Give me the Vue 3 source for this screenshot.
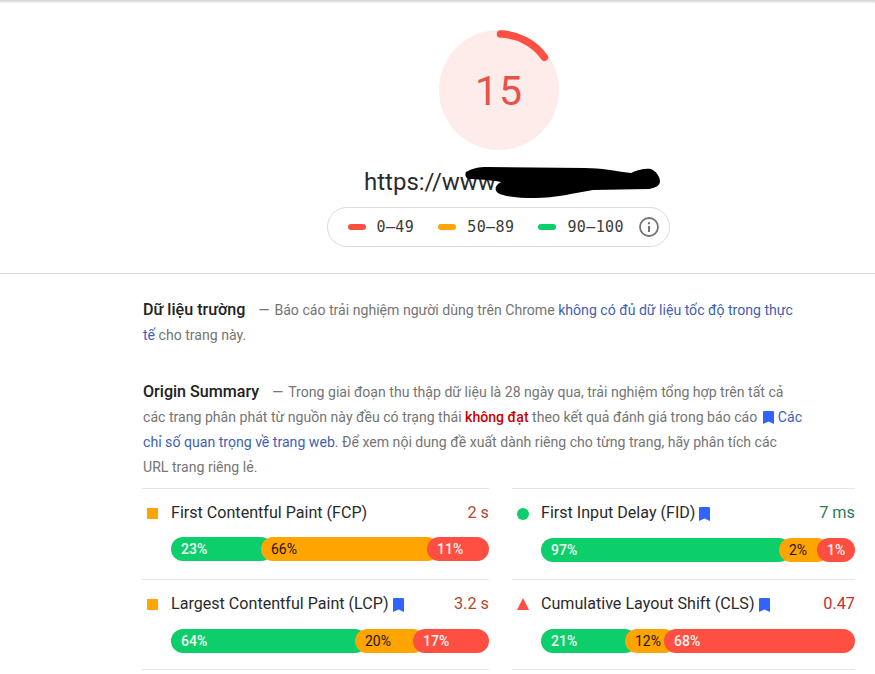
<script setup>
const legend = [
  { label: '0–49', color: '#ff4e42' },
  { label: '50–89', color: '#ffa400' },
  { label: '90–100', color: '#0cce6b' }
]
const rows = [
  { name: 'First Contentful Paint (FCP)', mark: false, value: '2 s', tone: 'avg', shape: 'square', cols: 'left', starts: [90, 256], labels: ['23%', '66%', '11%'] },
  { name: 'First Input Delay (FID)', mark: true, value: '7 ms', tone: 'good', shape: 'dot', cols: 'right', starts: [238, 276], labels: ['97%', '2%', '1%'] },
  { name: 'Largest Contentful Paint (LCP)', mark: true, value: '3.2 s', tone: 'avg', shape: 'square', cols: 'left', starts: [184, 242], labels: ['64%', '20%', '17%'] },
  { name: 'Cumulative Layout Shift (CLS)', mark: true, value: '0.47', tone: 'bad', shape: 'tri', cols: 'right', starts: [84, 123], labels: ['21%', '12%', '68%'] }
]
function segWidth(row, i) {
  const total = row.cols === 'left' ? 318 : 314
  const edges = [0, row.starts[0], row.starts[1], total]
  return (edges[i + 1] - edges[i] + (i < 2 ? 12 : 0)) + 'px'
}
</script>

<template>
  <div class="page">
    <div class="topbar"></div>
    <header class="head">
      <svg class="gauge" width="120" height="120" viewBox="0 0 120 120">
        <circle cx="60" cy="60" r="60" fill="#feecea" />
        <circle cx="60" cy="60" r="56" fill="none" stroke="#ff4e42" stroke-width="7.5" stroke-linecap="round"
          stroke-dasharray="51.5 400" transform="rotate(-88.5 60 60)" />
      </svg>
      <div class="score">15</div>
      <div class="url-wrap">
        <div class="url">https://www</div>
        <svg class="blot" width="200" height="36" viewBox="0 0 200 36">
          <path fill="#000" d="M1 7 C8 3 14 2 22 2 L120 3 C136 3 150 6 166 8 C172 5 180 3 186 4 C191 6 195 12 195 16 C195 21 190 23 184 24 L128 25 C110 28 90 33 70 33 C55 33 40 32 33 28 C29 25 30 20 36 17 C26 15 12 14 3 14 C0 12 0 9 1 7 Z" />
        </svg>
      </div>
      <div class="pill">
        <div v-for="item in legend" :key="item.label" class="legend-item">
          <span class="dash" :style="{ background: item.color }"></span>
          <span class="range">{{ item.label }}</span>
        </div>
        <svg class="info" width="20" height="20" viewBox="0 0 20 20">
          <circle cx="10" cy="10" r="9" fill="none" stroke="#757575" stroke-width="1.8" />
          <rect x="9" y="9" width="2" height="6" fill="#757575" />
          <rect x="9" y="5.2" width="2" height="2" fill="#757575" />
        </svg>
      </div>
    </header>

    <main class="content">
      <p class="para first">
        <strong class="lead">Dữ liệu trường</strong><span class="sep">—</span>Báo cáo trải nghiệm người dùng trên Chrome
        <a class="link">không có đủ dữ liệu tốc độ trong thực<br />tế</a> cho trang này.
      </p>
      <p class="para second">
        <strong class="lead">Origin Summary</strong><span class="sep">—</span>Trong giai đoạn thu thập dữ liệu là 28 ngày qua, trải nghiệm tổng hợp trên tất cả<br />
        các trang phân phát từ nguồn này đều có trạng thái <b class="fail">không đạt</b> theo kết quả đánh giá trong báo cáo
        <svg class="mark inline" width="11" height="13" viewBox="0 0 11 13"><path d="M1.2 0h8.6C10.5 0 11 .5 11 1.2V13L5.5 10.6 0 13V1.2C0 .5.5 0 1.2 0Z" /></svg><a class="link">Các<br />chỉ số quan trọng về trang web</a>. Để xem nội dung đề xuất dành riêng cho từng trang, hãy phân tích các<br />
        URL trang riêng lẻ.
      </p>

      <section class="grid">
        <article v-for="row in rows" :key="row.name" class="metric">
          <div class="metric-top">
            <span class="shape" :class="row.shape"></span>
            <span class="name">{{ row.name }}</span>
            <svg v-if="row.mark" class="mark" width="11" height="14" viewBox="0 0 11 14"><path d="M1.2 0h8.6C10.5 0 11 .5 11 1.2V14L5.5 11.4 0 14V1.2C0 .5.5 0 1.2 0Z" /></svg>
            <span class="value" :class="row.tone">{{ row.value }}</span>
          </div>
          <div class="bar">
            <span v-for="(label, i) in row.labels" :key="i" class="seg" :class="'seg' + i" :style="{ width: segWidth(row, i) }">{{ label }}</span>
          </div>
        </article>
      </section>
    </main>
  </div>
</template>

<style>
html, body { margin: 0; background: #fff; overflow: hidden; }
</style>

<style scoped>
.page {
  width: 875px;
  height: 674px;
  overflow: hidden;
  font-family: Roboto, "Noto Sans", sans-serif;
  color: #212121;
  background: #fff;
}
.topbar {
  height: 3px;
  background: linear-gradient(#d2d2d2, #f4f4f4);
}
.head {
  position: relative;
  height: 217px;
  padding: 27px 0 26px 123px;
  display: flex;
  flex-direction: column;
  align-items: center;
  border-bottom: 1px solid #dcdcdc;
}
.gauge { display: block; flex: none; }
.score {
  position: absolute;
  top: 60px;
  left: 123px;
  right: 0;
  text-align: center;
  font-size: 41px;
  line-height: 56px;
  letter-spacing: 1px;
  color: #e8524a;
}
.url-wrap {
  position: relative;
  margin-top: 17px;
  width: 270px;
  height: 30px;
}
.url {
  font-size: 24px;
  line-height: 30px;
  color: #2b2b2b;
}
.blot { position: absolute; left: 101px; top: -2px; }
.pill {
  margin-top: 10px;
  margin-left: -2px;
  width: 343px;
  height: 42px;
  box-sizing: border-box;
  border: 1px solid #dcdcdc;
  border-radius: 21px;
  display: flex;
  align-items: center;
  padding: 0 10px 0 20px;
  gap: 24px;
}
.legend-item { display: flex; align-items: center; gap: 11px; flex: none; }
.dash { width: 18px; height: 6px; border-radius: 3px; display: block; }
.range {
  font-family: "DejaVu Sans Mono", "Liberation Mono", monospace;
  font-size: 15px;
  letter-spacing: 0.4px;
  color: #3c3c3c;
  line-height: 20px;
  white-space: nowrap;
}
.info { margin-left: -9px; flex: none; }

.content { padding: 24px 20px 0 142px; }
.para {
  margin: 0 0 0 1px;
  font-size: 14.1px;
  line-height: 25px;
  color: #757575;
  white-space: nowrap;
}
.second { margin-top: 32px; }
.lead { font-size: 16.1px; line-height: 1; font-weight: 500; color: #212121; }
.sep { margin: 0 5px 0 13px; }
.link { color: #3f5fb5; }
.fail { color: #c80000; font-weight: 500; }
.mark { fill: #3164ff; flex: none; margin-top: 1px; }
.mark.inline { vertical-align: -2px; margin: 0 4px 0 2px; }

.grid {
  margin-top: 8px;
  display: grid;
  grid-template-columns: 347px 343px;
  column-gap: 23px;
}
.metric {
  height: 91px;
  box-sizing: border-box;
  border-top: 1px solid #e6e6e6;
  padding: 12px 0 0 29px;
}
.metric:nth-last-child(-n + 2) {
  border-bottom: 1px solid #e6e6e6;
}
.metric-top {
  position: relative;
  display: flex;
  align-items: center;
  gap: 4px;
  height: 24px;
}
.shape { position: absolute; left: -24px; top: 7px; width: 11px; height: 11px; }
.shape.square { background: #ffa400; }
.shape.dot { background: #0cce6b; border-radius: 50%; width: 12px; height: 12px; top: 7px; }
.shape.tri {
  top: 6px;
  width: 0; height: 0;
  border-left: 6px solid transparent;
  border-right: 6px solid transparent;
  border-bottom: 12px solid #ff4e42;
}
.name { font-size: 16.1px; line-height: 24px; color: #2a2a2a; }
.value { margin-left: auto; font-size: 16.3px; line-height: 24px; }
.value.avg { color: #b5482a; }
.value.good { color: #2c7a55; }
.value.bad { color: #c4302b; }
.bar {
  margin-top: 13px;
  display: flex;
  height: 24px;
}
.metric:first-child .bar { margin-top: 12px; }
.seg {
  display: block;
  flex: none;
  box-sizing: border-box;
  height: 24px;
  line-height: 24px;
  padding-left: 10px;
  font-size: 14px;
  font-weight: 500;
  border-radius: 12px;
  margin-left: -12px;
  white-space: nowrap;
}
.seg0 { background: #0cce6b; color: #f4fff8; margin-left: 0; }
.seg1 { background: #ffa400; color: #1f1300; font-weight: 400; }
.seg2 { background: #ff4e42; color: #fff2f0; }
</style>
